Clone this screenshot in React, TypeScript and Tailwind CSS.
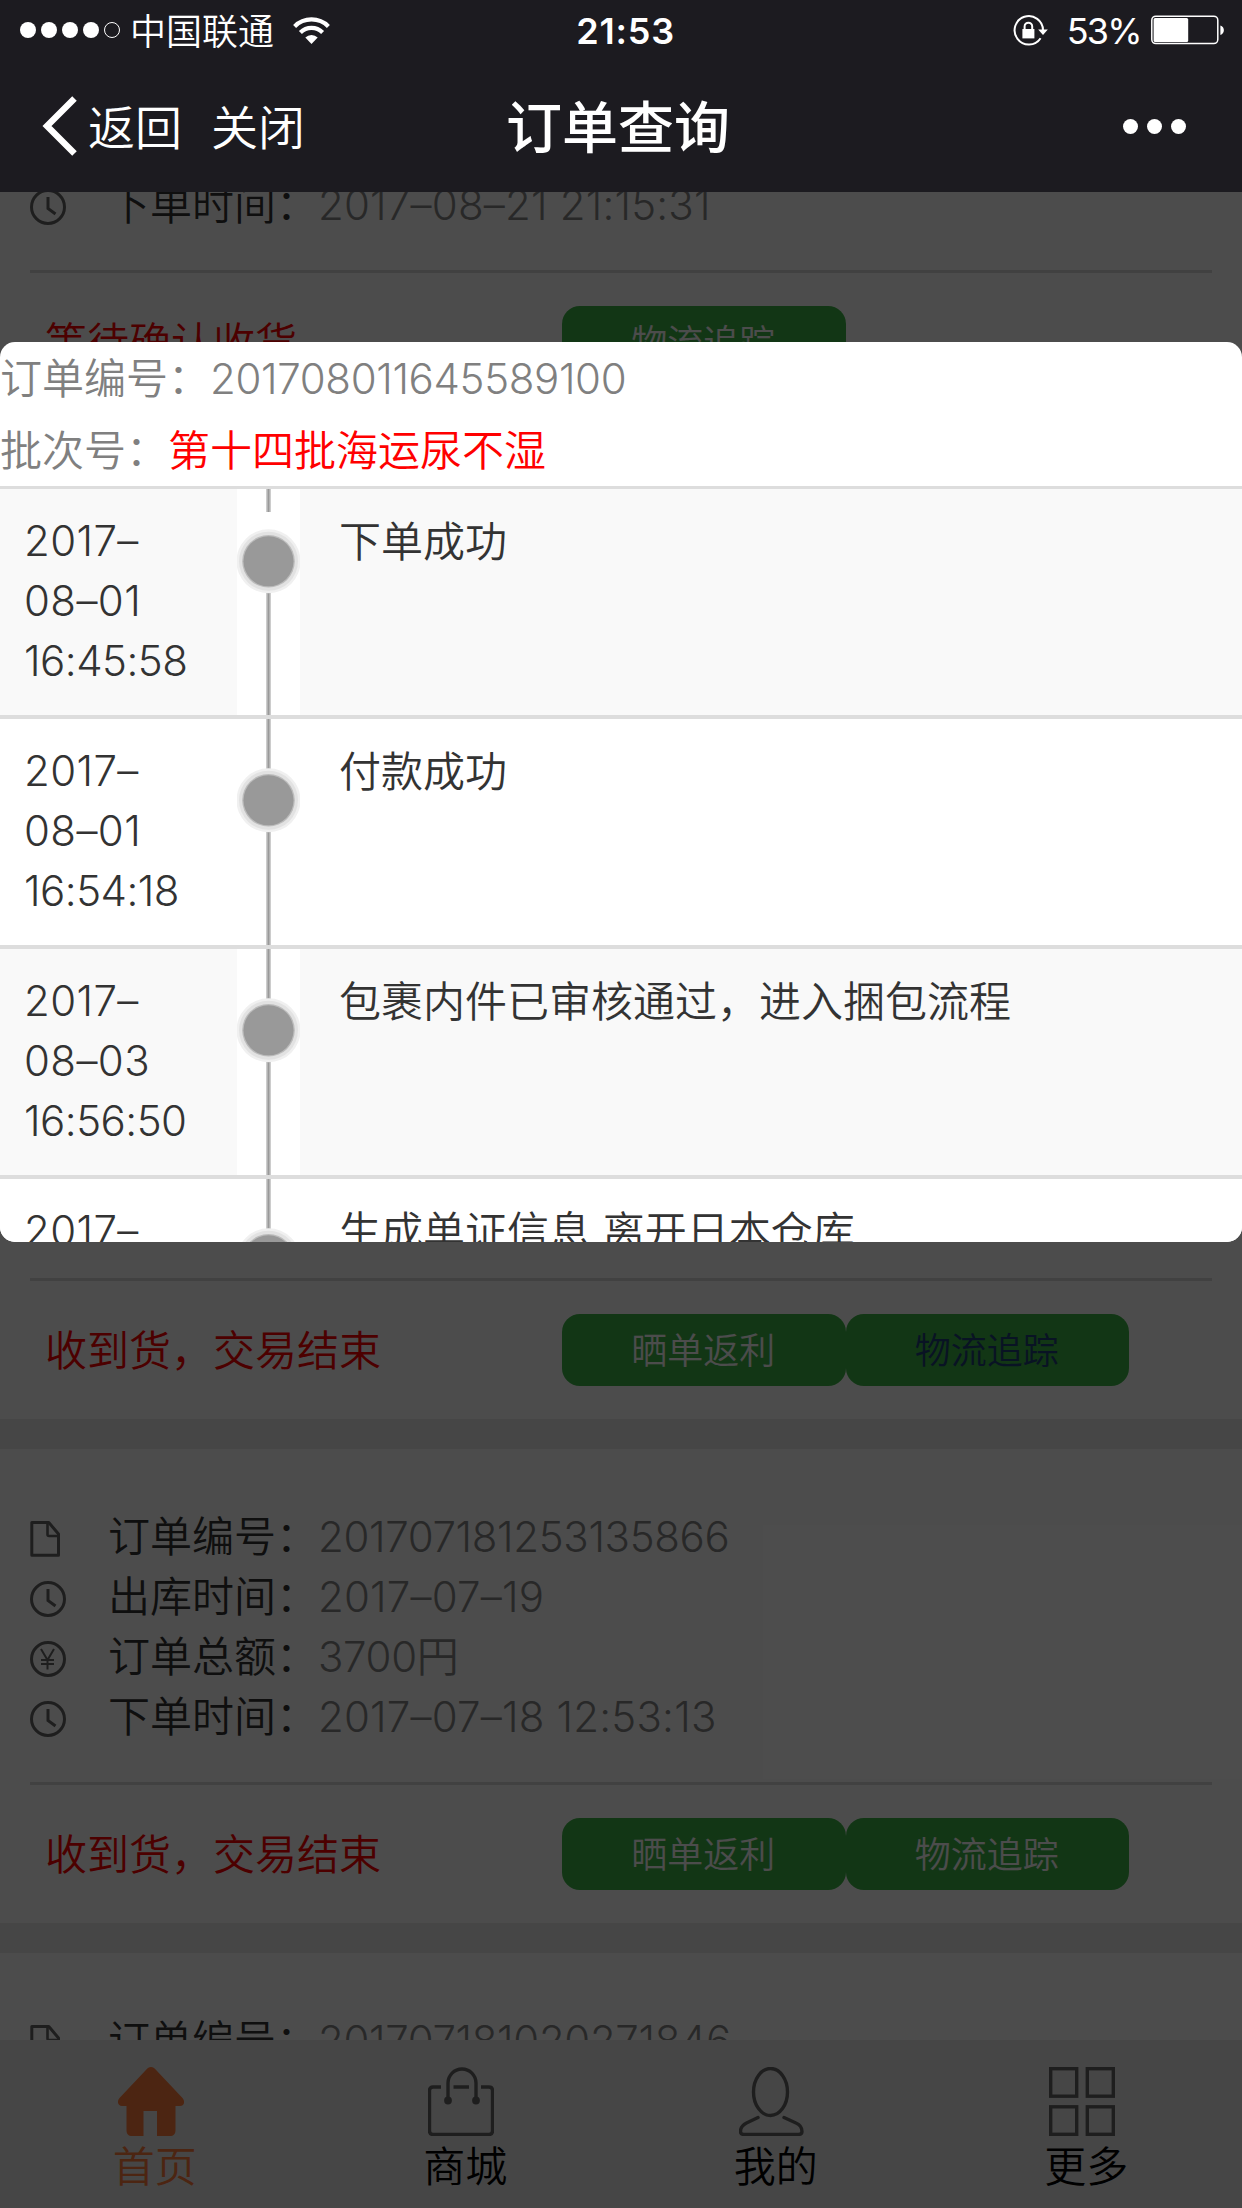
import type { ReactNode } from 'react'

interface OrderRow {
  kind: 'file' | 'clock' | 'yen'
  label: string
  value: string
}

interface Order {
  id: number
  rows: OrderRow[]
  status?: string
  actions: { label: string; visited?: boolean }[]
}

interface TrackEvent {
  date: string[]
  text: string
}

const ORDERS: Order[] = [
  {
    id: 1,
    rows: [{ kind: 'clock', label: '下单时间', value: '2017–08–21 21:15:31' }],
    status: '等待确认收货',
    actions: [{ label: '物流追踪' }],
  },
  { id: 2, rows: [], actions: [] },
  {
    id: 3,
    rows: [],
    status: '收到货，交易结束',
    actions: [{ label: '晒单返利' }, { label: '物流追踪', visited: true }],
  },
  {
    id: 4,
    rows: [
      { kind: 'file', label: '订单编号', value: '201707181253135866' },
      { kind: 'clock', label: '出库时间', value: '2017–07–19' },
      { kind: 'yen', label: '订单总额', value: '3700円' },
      { kind: 'clock', label: '下单时间', value: '2017–07–18 12:53:13' },
    ],
    status: '收到货，交易结束',
    actions: [{ label: '晒单返利' }, { label: '物流追踪' }],
  },
]

const EVENTS: TrackEvent[] = [
  { date: ['2017–', '08–01', '16:45:58'], text: '下单成功' },
  { date: ['2017–', '08–01', '16:54:18'], text: '付款成功' },
  { date: ['2017–', '08–03', '16:56:50'], text: '包裹内件已审核通过，进入捆包流程' },
  { date: ['2017–'], text: '生成单证信息,离开日本仓库' },
]

function StatusBar() {
  return (
    <div className="flex h-[60px] items-center pl-5 pr-[17px] text-[36px] leading-9">
      <div className="flex flex-1 items-center">
        <div className="flex gap-[5px]">
          {[0, 1, 2, 3].map((i) => (
            <span key={i} className="size-4 rounded-full bg-white" />
          ))}
          <span className="size-4 rounded-full border border-white" />
        </div>
        <span className="ml-[10px] pt-[3px]">中国联通</span>
        <svg className="ml-[19px] h-[27px] w-[37px]" viewBox="0 0 37 27" fill="none" stroke="#fff" strokeWidth="4.2">
          <path d="M1.6 9.4a24 24 0 0 1 33.8 0" />
          <path d="M7.4 15.4a15.8 15.8 0 0 1 22.2 0" />
          <path d="M18.5 27l-6.2-6.4a8.8 8.8 0 0 1 12.4 0z" fill="#fff" stroke="none" />
        </svg>
      </div>
      <span className="pl-[6px] pt-[2px] font-semibold tracking-[0.8px]">21:53</span>
      <div className="flex flex-1 items-center justify-end">
        <svg className="mr-[19px] h-[31px] w-[35px]" viewBox="0 0 35 31" fill="none" stroke="#fff" strokeWidth="2">
          <path d="M27.6 23.2A14.2 14.2 0 1 1 30 15.5" />
          <path d="M25.2 14.6h9.6l-4.8 5.4z" fill="#fff" stroke="none" />
          <rect x="9.4" y="14" width="12" height="9.4" fill="#fff" stroke="none" />
          <path d="M11.6 14.5v-3a3.8 3.8 0 0 1 7.6 0v3" />
        </svg>
        <span className="pt-[2px] font-normal tracking-[-1.7px]">53%</span>
        <svg className="ml-[10px] h-[30px] w-[74px]" viewBox="0 0 74 30">
          <rect x="0.8" y="1.2" width="66" height="27.4" rx="4" fill="none" stroke="#fff" strokeWidth="1.5" />
          <rect x="2.6" y="3" width="34.6" height="24" rx="1.5" fill="#fff" />
          <path d="M69.4 10.5c4.6 1.4 4.6 8 0 9.4z" fill="#fff" />
        </svg>
      </div>
    </div>
  )
}

function NavBar() {
  return (
    <div className="flex h-[132px] items-center pl-[42px] pr-[48px]">
      <div className="flex flex-1 items-center text-[47px]">
        <svg className="h-[60px] w-[36px]" viewBox="0 0 36 60" fill="none" stroke="#fff" strokeWidth="6.4">
          <path d="M32.5 2.5L5 30l27.5 27.5" />
        </svg>
        <span className="ml-[10px] pt-[5px]">返回</span>
        <span className="ml-[29px] pt-[5px]">关闭</span>
      </div>
      <h1 className="pl-2 pt-[4px] text-[56px] font-medium leading-[80px]">订单查询</h1>
      <div className="flex flex-1 justify-end gap-[9px] pr-2">
        <span className="size-[15px] rounded-full bg-white" />
        <span className="size-[15px] rounded-full bg-white" />
        <span className="size-[15px] rounded-full bg-white" />
      </div>
    </div>
  )
}

const ICONS: Record<OrderRow['kind'], ReactNode> = {
  file: (
    <g strokeWidth="3" strokeLinejoin="round">
      <path d="M1.8 1.5h17L28.5 13v21.3H1.8z" />
      <path d="M17.5 2v11.5q0 1.5 1.5 1.5h9.5" strokeWidth="2.6" />
    </g>
  ),
  clock: (
    <g strokeWidth="3">
      <circle cx="18" cy="18" r="16.5" />
      <path d="M18 8v11.5l7.5 5.5" />
    </g>
  ),
  yen: (
    <g strokeWidth="3">
      <circle cx="18" cy="18" r="16.5" />
      <path d="M11 8l6.5 11L24 8M17.5 18v10.500M11 19h13M11 23h13" strokeWidth="2" />
    </g>
  ),
}

function Row({ row }: { row: OrderRow }) {
  const isDate = row.value.includes('–')
  return (
    <div className="flex h-[60px] shrink-0 items-center text-[42px] leading-[56px]">
      <span className="w-[78px] pt-1.5">
        <svg className="size-9" viewBox="0 0 36 36" fill="none" stroke="#666">
          {ICONS[row.kind]}
        </svg>
      </span>
      <span className="w-[210px] whitespace-nowrap pt-[2px] text-[#333]">{row.label}：</span>
      <span className={`whitespace-nowrap pt-[2px] text-[#888] ${isDate ? 'tracking-[0.2px]' : 'tracking-[-0.35px]'}`}>
        {row.value}
      </span>
    </div>
  )
}

function OrderCard({ order, cut }: { order: Order; cut: boolean }) {
  return (
    <section
      className={`mb-[30px] flex shrink-0 flex-col justify-end overflow-hidden bg-white px-[30px] pb-[33px] ${cut ? 'h-[219px]' : 'h-[474px]'}`}
    >
      {order.rows.map((row) => (
        <Row key={row.label} row={row} />
      ))}
      {order.status && (
        <>
          <div className="mt-9 h-[3px] shrink-0 bg-[#d9d9d9]" />
          <div className="mt-[33px] flex h-[72px] shrink-0 items-center">
            <span className="w-[532px] pl-[15px] pt-px text-[42px] text-[#f00]">{order.status}</span>
            {order.actions.map((a) => (
              <button
                key={a.label}
                className={`h-[72px] w-[283.5px] rounded-[18px] bg-[#3cb446] pr-px pt-px text-[36px] ${a.visited ? 'text-[#214178]' : 'text-white'}`}
              >
                {a.label}
              </button>
            ))}
          </div>
        </>
      )}
    </section>
  )
}

const TABS = [
  {
    label: '首页',
    color: 'text-[#ff7d3c]',
    icon: (
      <path
        d="M33 0c2 0 3.4 1 4.6 2.6L64.5 31c3 3.6 1.6 8-2.5 8h-4.5v24c0 4-2 6-5.5 6H39V44H25.5v25H14c-3.5 0-5.5-2-5.5-6V39H4c-4 0-5.5-4.4-2.5-8L28.4 2.6C29.6 1 31 0 33 0z"
        fill="#ff7d3c"
      />
    ),
  },
  {
    label: '商城',
    color: 'text-black',
    icon: (
      <g fill="none" stroke="#666" strokeWidth="3.4">
        <path d="M13 20H5q-3.5 0-3.5 3.5v40.500q0 3.5 3.5 3.5h56q3.5 0 3.5-3.5V23.500q0-3.5-3.5-3.5h-8M25.500 20H41" />
        <path d="M20 33V16a14 14 0 0 1 28 0v17" />
        <circle cx="20" cy="33.5" r="2.2" fill="#666" />
        <circle cx="48" cy="33.5" r="2.2" fill="#666" />
      </g>
    ),
  },
  {
    label: '我的',
    color: 'text-black',
    icon: (
      <g fill="none" stroke="#666" strokeWidth="3.4">
        <ellipse cx="31.5" cy="25" rx="17" ry="23.5" />
        <path d="M19 50.5L7.5 56q-6 3-6 8.5 0 3 3.5 3h54q4 0 4-3 0-6-6-8.5L45 50.5" strokeLinecap="round" />
      </g>
    ),
  },
  {
    label: '更多',
    color: 'text-black',
    icon: (
      <g fill="none" stroke="#666" strokeWidth="3.4">
        <rect x="1.7" y="1.7" width="26" height="27.5" />
        <rect x="38.3" y="1.7" width="26" height="27.5" />
        <rect x="1.7" y="39.8" width="26" height="27.5" />
        <rect x="38.3" y="39.8" width="26" height="27.5" />
      </g>
    ),
  },
]

function TabBar() {
  return (
    <nav className="grid h-[168px] shrink-0 grid-cols-4 bg-[#ebebeb]">
      {TABS.map((t) => (
        <div key={t.label} className={`flex flex-col items-center pt-[27px] text-[42px] ${t.color}`}>
          <svg className="mr-[9px] h-[69px] w-[66px]" viewBox="0 0 66 69">
            {t.icon}
          </svg>
          <span className="mr-px leading-[62px]">{t.label}</span>
        </div>
      ))}
    </nav>
  )
}

function TimelineNode({ first }: { first: boolean }) {
  const cy = first ? 72.3 : 81.3
  return (
    <svg className="h-full w-[63px] shrink-0 bg-white" viewBox="0 0 63 226">
      <rect x="29" width="5" height={first ? 23 : 226} fill="#ccc" />
      <rect x="30.5" width="2" height={first ? 23 : 226} fill="#999" />
      {first && (
        <>
          <rect x="29" y={cy} width="5" height="154" fill="#ccc" />
          <rect x="30.5" y={cy} width="2" height="154" fill="#999" />
        </>
      )}
      <circle cx="31.5" cy={cy} r="32" fill="#f0f0f0" />
      <circle cx="31.5" cy={cy} r="29.5" fill="#e2e2e2" />
      <circle cx="31.5" cy={cy} r="26.3" fill="#bbb" />
      <circle cx="31.5" cy={cy} r="25" fill="#999" />
    </svg>
  )
}

function TrackingModal() {
  return (
    <div className="absolute inset-x-0 top-[342px] h-[900px] overflow-hidden rounded-[15px] bg-white text-[42px]">
      <p className="h-[72px] leading-[74px] text-[#808080]">
        订单编号：<span className="tracking-[-0.35px]">201708011645589100</span>
      </p>
      <p className="h-[72px] leading-[74px] text-[#808080]">
        批次号：<span className="text-[#f00]">第十四批海运尿不湿</span>
      </p>
      <div className="h-[3px] bg-[#ddd]" />
      {EVENTS.map((ev, i) => (
        <div
          key={i}
          className={`flex h-[230px] border-b-4 border-[#ddd] leading-[60px] text-[#333] ${i % 2 === 0 ? 'bg-[#f9f9f9]' : 'bg-white'}`}
        >
          <div className="w-[237px] shrink-0 pl-6 pt-[22px]">
            {ev.date.map((line) => (
              <div key={line} className={line.includes(':') ? 'tracking-[-0.5px]' : 'tracking-[0.4px]'}>
                {line}
              </div>
            ))}
          </div>
          <TimelineNode first={i === 0} />
          <div className="pl-[39px] pt-[23px]">{ev.text}</div>
        </div>
      ))}
    </div>
  )
}

export default function App() {
  return (
    <div className="relative flex h-[2208px] w-[1242px] flex-col overflow-hidden bg-[#ebebeb] font-['Inter','Noto_Sans_CJK_SC',sans-serif] font-[350]">
      <header className="h-[192px] shrink-0 bg-[#1c1b20] text-white">
        <StatusBar />
        <NavBar />
      </header>
      <main className="min-h-0 flex-1 overflow-hidden">
        {ORDERS.map((o, i) => (
          <OrderCard key={o.id} order={o} cut={i === 0} />
        ))}
        {/* next order, only its first line shows above the tab bar */}
        <section className="h-[474px] bg-white px-[30px] pt-[57px]">
          <Row row={{ kind: 'file', label: '订单编号', value: '201707181020271846' }} />
        </section>
      </main>
      <TabBar />
      <div className="absolute inset-x-0 bottom-0 top-[192px] bg-black/70" />
      <TrackingModal />
    </div>
  )
}
